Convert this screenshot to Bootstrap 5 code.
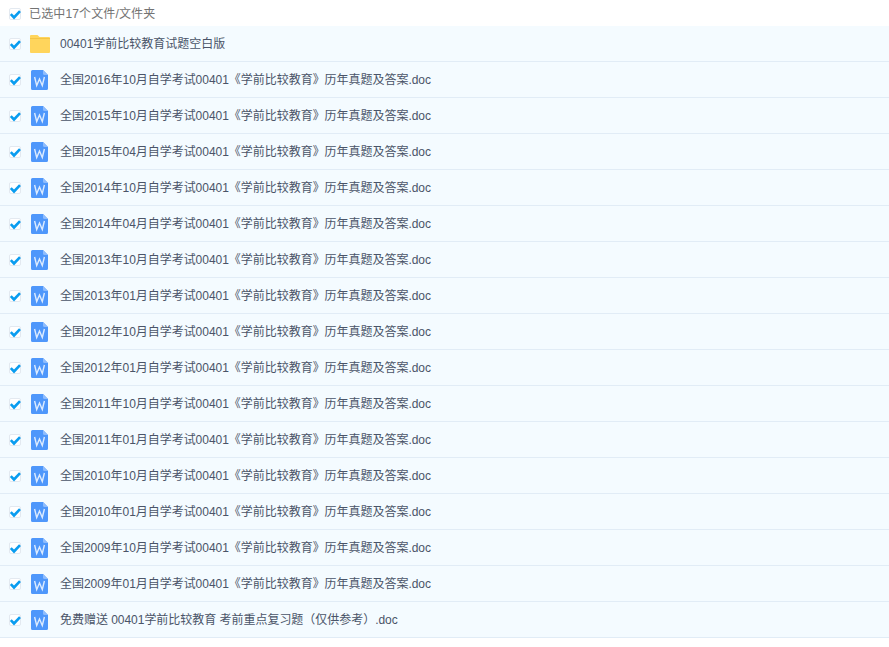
<!DOCTYPE html>
<html lang="zh">
<head>
<meta charset="utf-8">
<title>文件列表</title>
<link href="https://cdn.jsdelivr.net/npm/bootstrap@5.3.0/dist/css/bootstrap.min.css" rel="stylesheet">
<style>
body{background:#fff;font-family:"Liberation Sans","Noto Sans CJK SC",sans-serif;font-size:12px;font-kerning:none;color:#4a5468;line-height:1;overflow:hidden}
.sel-head{height:26px;padding-left:9px;padding-top:1px;color:#737373;gap:8px;letter-spacing:.14px}
.file-row{height:36px;padding-left:9px;background:#f4fbff;border-bottom:1px solid #e1ecf6}
.tick{width:12px;height:12px;flex:none;display:block;margin-right:10px;overflow:visible}
.ficon{width:17px;height:20px;flex:none;display:block;margin-right:12px}
.ficon-folder{width:20px;height:18px;margin-left:-1px;margin-right:10px}
.fname{white-space:pre}
.fname-doc{letter-spacing:-.03px}
</style>
</head>
<body>
<svg width="0" height="0" class="d-block position-absolute">
<defs>
<symbol id="tick" viewBox="0 0 12 12" overflow="visible"><rect x=".5" y=".5" width="11" height="11" rx="1.500" fill="#fff" stroke="#e3e9f0"/><path d="M1.800 6.200 5 9.500 11 3.200" fill="none" stroke="#0a9df0" stroke-width="2.600"/></symbol>
<symbol id="word" viewBox="0 0 17 20" preserveAspectRatio="none"><path d="M1.500 0H12l5 5v13.500A1.500 1.500 0 0 1 15.500 20h-14A1.500 1.500 0 0 1 0 18.500v-17A1.500 1.500 0 0 1 1.500 0z" fill="#4e97fb"/><path d="M12 0l5 5h-3.500A1.500 1.500 0 0 1 12 3.500z" fill="#8dbcfd"/><path d="M3.600 7 5.700 15.500 8.500 9 11.300 15.500 13.400 7" fill="none" stroke="#dcebff" stroke-width="1.400"/></symbol>
<symbol id="folder" viewBox="0 0 20 18"><path d="M1 0h6.500l2 2H19a1 1 0 0 1 1 1v14a1 1 0 0 1-1 1H1a1 1 0 0 1-1-1V1a1 1 0 0 1 1-1z" fill="#ffd55c"/><path d="M0 3h20v1H0z" fill="#f4c445"/></symbol>
</defs>
</svg>
<div class="sel-head d-flex align-items-center">
<svg class="tick m-0"><use href="#tick"/></svg><span>已选中17个文件/文件夹</span>
</div>
<div id="list">
<div class="file-row d-flex align-items-center"><svg class="tick"><use href="#tick"/></svg><svg class="ficon ficon-folder"><use href="#folder"/></svg><span class="fname">00401学前比较教育试题空白版</span></div>
<script>
var items=["2016年10月","2015年10月","2015年04月","2014年10月","2014年04月","2013年10月","2013年01月","2012年10月","2012年01月","2011年10月","2011年01月","2010年10月","2010年01月","2009年10月","2009年01月"];
var names=items.map(function(d){return "全国"+d+"自学考试00401《学前比较教育》历年真题及答案.doc"});
names.push("免费赠送 00401学前比较教育 考前重点复习题（仅供参考）.doc");
names.forEach(function(n){
document.write('<div class="file-row d-flex align-items-center"><svg class="tick"><use href="#tick"/></svg><svg class="ficon"><use href="#word"/></svg><span class="fname fname-doc">'+n+'</span></div>');
});
</script>
</div>
<script src="https://cdn.jsdelivr.net/npm/bootstrap@5.3.0/dist/js/bootstrap.bundle.min.js"></script>
</body>
</html>
